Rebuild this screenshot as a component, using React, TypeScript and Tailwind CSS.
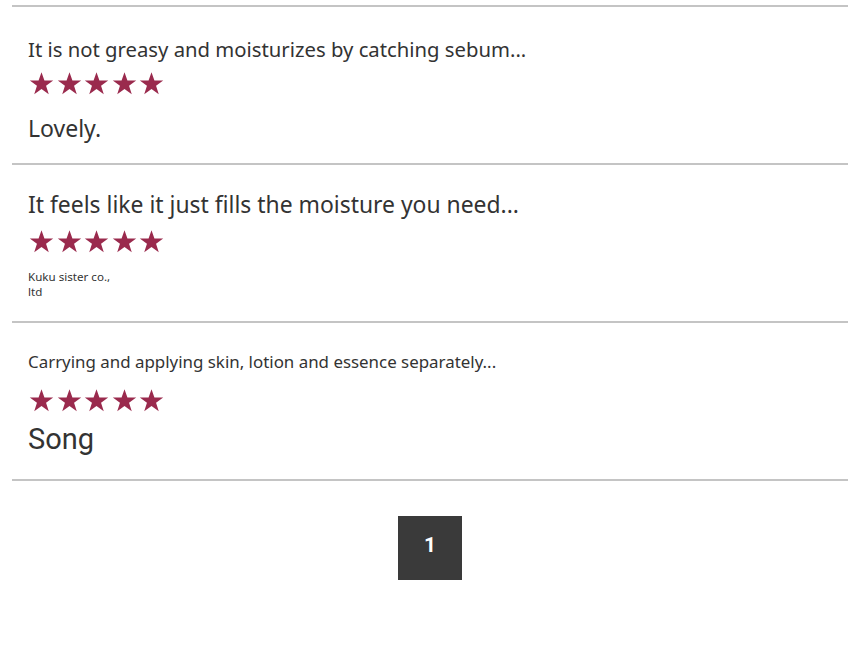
import React from "react";

const Star = () => (
  <svg width="27" height="26" viewBox="0 0 24 24" className="block">
    <path
      d="M12 1.2l2.7 7.6h8.1l-6.6 4.8 2.5 7.8L12 16.6l-6.7 4.8 2.5-7.8-6.6-4.8h8.1z"
      fill="#9a2a4d"
    />
  </svg>
);

const Stars = () => (
  <div className="flex gap-[0.5px]">
    <Star />
    <Star />
    <Star />
    <Star />
    <Star />
  </div>
);

export default function App() {
  const font = { fontFamily: "'Source Sans Pro', 'Noto Sans', sans-serif" };
  return (
    <div className="w-[860px] h-[651px] bg-white text-[#333]" style={font}>
      <div className="pt-[5px] px-3">
        <section className="border-t-2 border-[#c4c4c4] h-[158px] px-4 pt-[28px]">
          <p className="text-[20.3px] leading-[28px]">
            It is not greasy and moisturizes by catching sebum...
          </p>
          <div className="mt-[8px]">
            <Stars />
          </div>
          <p className="mt-[16px] text-[23px] leading-[30px]">Lovely.</p>
        </section>
        <section className="border-t-2 border-[#c4c4c4] h-[158px] px-4 pt-[24px]">
          <p className="text-[22.9px] leading-[32px]">
            It feels like it just fills the moisture you need...
          </p>
          <div className="mt-[8px]">
            <Stars />
          </div>
          <p className="mt-[14px] text-[11.6px] leading-[15px] w-[90px]">
            Kuku sister co., ltd
          </p>
        </section>
        <section className="border-t-2 border-[#c4c4c4] h-[158px] px-4 pt-[26px]">
          <p className="text-[16.9px] leading-[26px]">
            Carrying and applying skin, lotion and essence separately...
          </p>
          <div className="mt-[13px]">
            <Stars />
          </div>
          <p
            className="mt-[8px] text-[29px] leading-[34px]"
            style={{ fontFamily: "Roboto, sans-serif" }}
          >
            Song
          </p>
        </section>
        <div className="border-t-2 border-[#c4c4c4] flex justify-center pt-[35px]">
          <div
            className="w-16 h-16 bg-[#3a3a3a] text-white flex items-center justify-center text-[21px] font-bold pb-[5px]"
            style={{ fontFamily: "Roboto, sans-serif" }}
          >
            1
          </div>
        </div>
      </div>
    </div>
  );
}
